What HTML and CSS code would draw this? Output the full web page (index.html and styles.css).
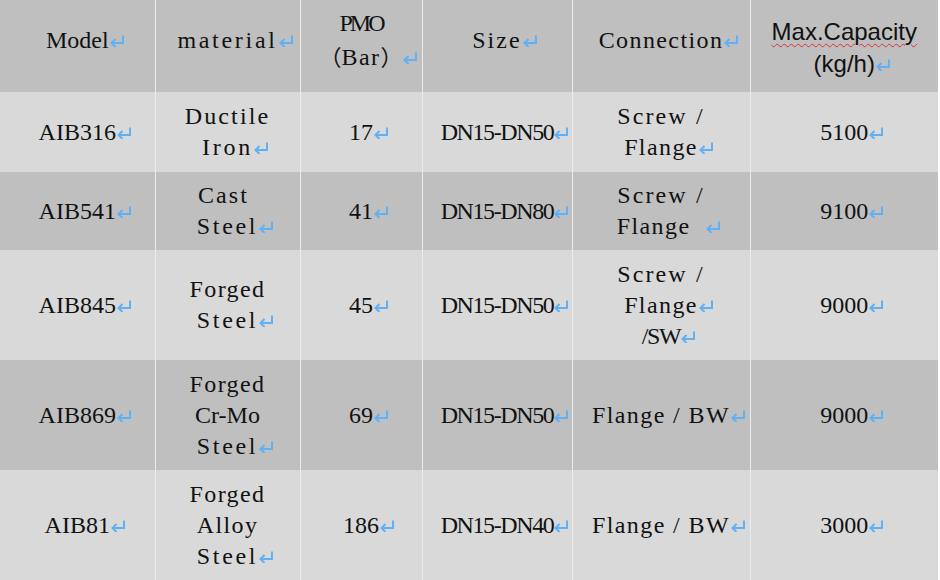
FILE: index.html
```html
<!DOCTYPE html>
<html>
<head>
<meta charset="utf-8">
<link rel="stylesheet" href="styles.css">
</head>
<body>
<table class="spec">
  <colgroup>
    <col class="c1"><col class="c2"><col class="c3"><col class="c4"><col class="c5"><col class="c6">
  </colgroup>
  <tr class="head">
    <td>Model<svg class="rm" viewBox="0 0 16 12"><path d="M14 0.5V8H2.5M6.5 4L2.5 8L6.5 12"/></svg></td>
    <td class="tp3">material<svg class="rm" viewBox="0 0 16 12"><path d="M14 0.5V8H2.5M6.5 4L2.5 8L6.5 12"/></svg></td>
    <td><span class="ln tpmo">PMO</span><span class="ln tp1"><span class="cjk">（</span>Bar<span class="cjk">）</span><svg class="rm" viewBox="0 0 16 12"><path d="M14 0.5V8H2.5M6.5 4L2.5 8L6.5 12"/></svg></span></td>
    <td class="tp2">Size<svg class="rm" viewBox="0 0 16 12"><path d="M14 0.5V8H2.5M6.5 4L2.5 8L6.5 12"/></svg></td>
    <td class="tp1">Connection<svg class="rm" viewBox="0 0 16 12"><path d="M14 0.5V8H2.5M6.5 4L2.5 8L6.5 12"/></svg></td>
    <td class="cap"><span class="ln"><span class="spell">Max.Capacity</span></span><span class="ln">(kg/h)<svg class="rm" viewBox="0 0 16 12"><path d="M14 0.5V8H2.5M6.5 4L2.5 8L6.5 12"/></svg></span></td>
  </tr>
  <tr class="light r1">
    <td>AIB316<svg class="rm" viewBox="0 0 16 12"><path d="M14 0.5V8H2.5M6.5 4L2.5 8L6.5 12"/></svg></td>
    <td><span class="ln tp2">Ductile</span><span class="ln tp3">Iron<svg class="rm" viewBox="0 0 16 12"><path d="M14 0.5V8H2.5M6.5 4L2.5 8L6.5 12"/></svg></span></td>
    <td>17<svg class="rm" viewBox="0 0 16 12"><path d="M14 0.5V8H2.5M6.5 4L2.5 8L6.5 12"/></svg></td>
    <td class="tn">DN15-DN50<svg class="rm" viewBox="0 0 16 12"><path d="M14 0.5V8H2.5M6.5 4L2.5 8L6.5 12"/></svg></td>
    <td><span class="ln tp2">Screw /</span><span class="ln tp1">Flange<svg class="rm" viewBox="0 0 16 12"><path d="M14 0.5V8H2.5M6.5 4L2.5 8L6.5 12"/></svg></span></td>
    <td>5100<svg class="rm" viewBox="0 0 16 12"><path d="M14 0.5V8H2.5M6.5 4L2.5 8L6.5 12"/></svg></td>
  </tr>
  <tr class="dark r2">
    <td>AIB541<svg class="rm" viewBox="0 0 16 12"><path d="M14 0.5V8H2.5M6.5 4L2.5 8L6.5 12"/></svg></td>
    <td><span class="ln tp2">Cast&nbsp;</span><span class="ln tp3">Steel<svg class="rm" viewBox="0 0 16 12"><path d="M14 0.5V8H2.5M6.5 4L2.5 8L6.5 12"/></svg></span></td>
    <td>41<svg class="rm" viewBox="0 0 16 12"><path d="M14 0.5V8H2.5M6.5 4L2.5 8L6.5 12"/></svg></td>
    <td class="tn">DN15-DN80<svg class="rm" viewBox="0 0 16 12"><path d="M14 0.5V8H2.5M6.5 4L2.5 8L6.5 12"/></svg></td>
    <td><span class="ln tp2">Screw /</span><span class="ln tp1">Flange&nbsp;&nbsp;<svg class="rm" viewBox="0 0 16 12"><path d="M14 0.5V8H2.5M6.5 4L2.5 8L6.5 12"/></svg></span></td>
    <td>9100<svg class="rm" viewBox="0 0 16 12"><path d="M14 0.5V8H2.5M6.5 4L2.5 8L6.5 12"/></svg></td>
  </tr>
  <tr class="light r3">
    <td>AIB845<svg class="rm" viewBox="0 0 16 12"><path d="M14 0.5V8H2.5M6.5 4L2.5 8L6.5 12"/></svg></td>
    <td><span class="ln tp1">Forged</span><span class="ln tp3">Steel<svg class="rm" viewBox="0 0 16 12"><path d="M14 0.5V8H2.5M6.5 4L2.5 8L6.5 12"/></svg></span></td>
    <td>45<svg class="rm" viewBox="0 0 16 12"><path d="M14 0.5V8H2.5M6.5 4L2.5 8L6.5 12"/></svg></td>
    <td class="tn">DN15-DN50<svg class="rm" viewBox="0 0 16 12"><path d="M14 0.5V8H2.5M6.5 4L2.5 8L6.5 12"/></svg></td>
    <td><span class="ln tp2">Screw /</span><span class="ln tp1">Flange<svg class="rm" viewBox="0 0 16 12"><path d="M14 0.5V8H2.5M6.5 4L2.5 8L6.5 12"/></svg></span><span class="ln tn">/SW<svg class="rm" viewBox="0 0 16 12"><path d="M14 0.5V8H2.5M6.5 4L2.5 8L6.5 12"/></svg></span></td>
    <td>9000<svg class="rm" viewBox="0 0 16 12"><path d="M14 0.5V8H2.5M6.5 4L2.5 8L6.5 12"/></svg></td>
  </tr>
  <tr class="dark r4">
    <td>AIB869<svg class="rm" viewBox="0 0 16 12"><path d="M14 0.5V8H2.5M6.5 4L2.5 8L6.5 12"/></svg></td>
    <td><span class="ln tp1">Forged</span><span class="ln">Cr-Mo</span><span class="ln tp3">Steel<svg class="rm" viewBox="0 0 16 12"><path d="M14 0.5V8H2.5M6.5 4L2.5 8L6.5 12"/></svg></span></td>
    <td>69<svg class="rm" viewBox="0 0 16 12"><path d="M14 0.5V8H2.5M6.5 4L2.5 8L6.5 12"/></svg></td>
    <td class="tn">DN15-DN50<svg class="rm" viewBox="0 0 16 12"><path d="M14 0.5V8H2.5M6.5 4L2.5 8L6.5 12"/></svg></td>
    <td class="tp1">Flange / BW<svg class="rm" viewBox="0 0 16 12"><path d="M14 0.5V8H2.5M6.5 4L2.5 8L6.5 12"/></svg></td>
    <td>9000<svg class="rm" viewBox="0 0 16 12"><path d="M14 0.5V8H2.5M6.5 4L2.5 8L6.5 12"/></svg></td>
  </tr>
  <tr class="light r5">
    <td>AIB81<svg class="rm" viewBox="0 0 16 12"><path d="M14 0.5V8H2.5M6.5 4L2.5 8L6.5 12"/></svg></td>
    <td><span class="ln tp1">Forged</span><span class="ln tp1">Alloy</span><span class="ln tp3">Steel<svg class="rm" viewBox="0 0 16 12"><path d="M14 0.5V8H2.5M6.5 4L2.5 8L6.5 12"/></svg></span></td>
    <td>186<svg class="rm" viewBox="0 0 16 12"><path d="M14 0.5V8H2.5M6.5 4L2.5 8L6.5 12"/></svg></td>
    <td class="tn">DN15-DN40<svg class="rm" viewBox="0 0 16 12"><path d="M14 0.5V8H2.5M6.5 4L2.5 8L6.5 12"/></svg></td>
    <td class="tp1">Flange / BW<svg class="rm" viewBox="0 0 16 12"><path d="M14 0.5V8H2.5M6.5 4L2.5 8L6.5 12"/></svg></td>
    <td>3000<svg class="rm" viewBox="0 0 16 12"><path d="M14 0.5V8H2.5M6.5 4L2.5 8L6.5 12"/></svg></td>
  </tr>
</table>
</body>
</html>
```

FILE: styles.css
```css
html, body {
  margin: 0;
  padding: 0;
  background: #ffffff;
}

.spec {
  width: 938px;
  table-layout: fixed;
  border-collapse: collapse;
  font-family: "Liberation Serif", "Times New Roman", "Noto Sans CJK SC", serif;
  font-size: 24px;
  color: #111111;
}

.c1 { width: 155px; }
.c2 { width: 145px; }
.c3 { width: 122px; }
.c4 { width: 150px; }
.c5 { width: 178px; }
.c6 { width: 188px; }

.spec td {
  padding: 0;
  text-align: center;
  vertical-align: middle;
  line-height: 31px;
  border-left: 1px solid #ececec;
  white-space: nowrap;
}

.spec td:first-child {
  border-left: none;
}

.ln {
  display: block;
}

/* letter-spacing to imitate the half-width Song face of the source */
.tn { letter-spacing: -1.4px; }
.tp1 { letter-spacing: 1.4px; }
.tp2 { letter-spacing: 2.1px; }
.tp3 { letter-spacing: 2.7px; }
.tpmo { letter-spacing: -3px; }

.cjk {
  font-family: "Noto Sans CJK SC", sans-serif;
  font-size: 22px;
  letter-spacing: 0;
}

.head { height: 92px; background: #bfbfbf; }
.head td { padding-bottom: 12px; line-height: 32px; }
.head td.cap { padding-bottom: 0; padding-top: 4px; }

.r1 { height: 80px; }
.r2 { height: 78px; }
.r3, .r4, .r5 { height: 110px; }

.light { background: #d9d9d9; }
.dark { background: #bfbfbf; }

.cap {
  font-family: "Liberation Sans", Arial, sans-serif;
  font-size: 24px;
  letter-spacing: 0;
}

.spell {
  text-decoration: underline wavy #e0303a;
  text-decoration-thickness: 1px;
  text-underline-offset: 3px;
}

.rm {
  display: inline-block;
  width: 16px;
  height: 12px;
  margin-right: -16px;
  vertical-align: 1px;
  fill: none;
  stroke: #5fb0f4;
  stroke-width: 2;
}
```
